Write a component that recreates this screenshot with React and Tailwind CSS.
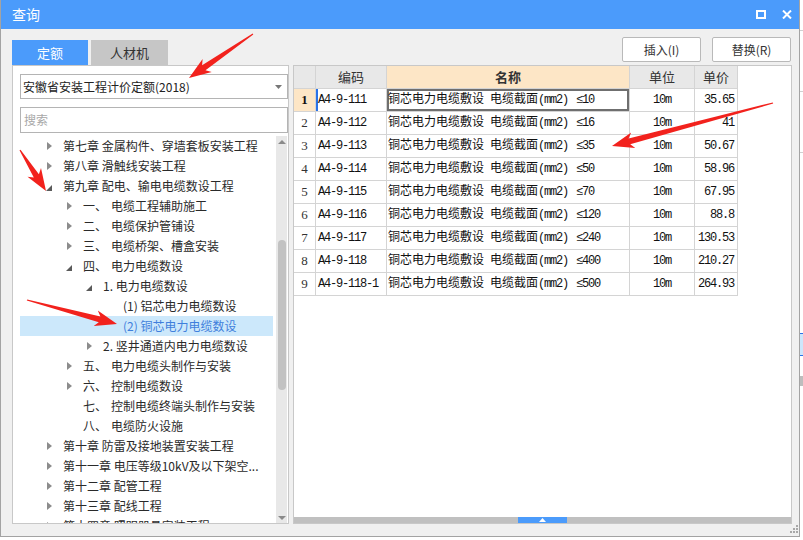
import React from "react";

const MONO = "font-['Liberation_Mono','Noto_Sans_CJK_SC',monospace]";

const TREE = [
  { lv: 0, icon: "c", text: "第七章 金属构件、穿墙套板安装工程" },
  { lv: 0, icon: "c", text: "第八章 滑触线安装工程" },
  { lv: 0, icon: "o", text: "第九章 配电、输电电缆数设工程" },
  { lv: 1, icon: "c", pre: "一、", text: "电缆工程辅助施工" },
  { lv: 1, icon: "c", pre: "二、", text: "电缆保护管铺设" },
  { lv: 1, icon: "c", pre: "三、", text: "电缆桥架、槽盒安装" },
  { lv: 1, icon: "o", pre: "四、", text: "电力电缆数设" },
  { lv: 2, icon: "o", text: "1. 电力电缆数设" },
  { lv: 3, text: "(1) 铝芯电力电缆数设" },
  { lv: 3, text: "(2) 铜芯电力电缆数设", sel: true },
  { lv: 2, icon: "c", text: "2. 竖井通道内电力电缆数设" },
  { lv: 1, icon: "c", pre: "五、", text: "电力电缆头制作与安装" },
  { lv: 1, icon: "c", pre: "六、", text: "控制电缆数设" },
  { lv: 1, pre: "七、", text: "控制电缆终端头制作与安装" },
  { lv: 1, pre: "八、", text: "电缆防火设施" },
  { lv: 0, icon: "c", text: "第十章 防雷及接地装置安装工程" },
  { lv: 0, icon: "c", text: "第十一章 电压等级10kV及以下架空..." },
  { lv: 0, icon: "c", text: "第十二章 配管工程" },
  { lv: 0, icon: "c", text: "第十三章 配线工程" },
  { lv: 0, icon: "c", text: "第十四章 照明器具安装工程" },
];

const PAD = ["pl-[26px]", "pl-[46px]", "pl-[66px]", "pl-[86px]"];

const ROWS = [
  ["A4-9-111", "10", "35.65"],
  ["A4-9-112", "16", "41"],
  ["A4-9-113", "35", "50.67"],
  ["A4-9-114", "50", "58.96"],
  ["A4-9-115", "70", "67.95"],
  ["A4-9-116", "120", "88.8"],
  ["A4-9-117", "240", "130.53"],
  ["A4-9-118", "400", "210.27"],
  ["A4-9-118-1", "500", "264.93"],
];

// red annotation arrows drawn over the screenshot
const ARROWS = [
  [253, 34, 189, 78],
  [20, 150, 46, 191],
  [27, 300, 117, 324],
  [773, 103, 612, 146],
];

function arrowPts(x1, y1, x2, y2) {
  const dx = x2 - x1, dy = y2 - y1, L = Math.hypot(dx, dy);
  const ux = dx / L, uy = dy / L, nx = -uy, ny = ux;
  const hl = 18, hw = 8, sw = 3;
  const bx = x2 - ux * hl, by = y2 - uy * hl;
  const p = (x, y) => `${x.toFixed(1)},${y.toFixed(1)}`;
  return [
    p(x1 + nx * 0.6, y1 + ny * 0.6),
    p(bx + nx * sw, by + ny * sw),
    p(bx - ux * 4 + nx * hw, by - uy * 4 + ny * hw),
    p(x2, y2),
    p(bx - ux * 4 - nx * hw, by - uy * 4 - ny * hw),
    p(bx - nx * sw, by - ny * sw),
    p(x1 - nx * 0.6, y1 - ny * 0.6),
  ].join(" ");
}

function TreeIcon({ type }) {
  if (type === "c")
    return (
      <svg width="5" height="8" className="ml-[1px]">
        <polygon points="0,0 5,4 0,8" fill="#8c8c8c" />
      </svg>
    );
  if (type === "o")
    return (
      <svg width="6" height="6" className="mt-[3px]">
        <polygon points="6,0 6,6 0,6" fill="#5a5a5a" />
      </svg>
    );
  return null;
}

function LeftPanel() {
  return (
    <div className="w-[277px] bg-white border border-[#c8c8c8] flex flex-col">
      <div className="mt-[8px] ml-[7px] w-[268px] h-[25px] border border-[#b4b4b4] flex items-center justify-between pl-[2px] pr-[5px] text-[#222]">
        <span>安徽省安装工程计价定额(2018)</span>
        <svg width="7" height="4">
          <polygon points="0,0 7,0 3.5,4" fill="#777" />
        </svg>
      </div>
      <div className="mt-[8px] ml-[7px] w-[268px] h-[26px] border border-[#b4b4b4] flex items-center pl-[3px] text-[#a8a8a8]">
        搜索
      </div>
      <div className="mt-[3px] ml-[7px] flex-1 flex overflow-hidden">
        <div className="w-[253px] flex flex-col">
          {TREE.map((r, i) => (
            <div
              key={i}
              className={`h-[20px] shrink-0 flex items-center ${PAD[r.lv]} ${r.sel ? "bg-[#cce8fb] text-[#3f7fdc]" : "text-[#2a2a2a]"}`}
            >
              <div className="w-[17px] flex items-center">
                <TreeIcon type={r.icon} />
              </div>
              {r.pre && <span className="w-[28px]">{r.pre}</span>}
              <span className="whitespace-nowrap">{r.text}</span>
            </div>
          ))}
        </div>
        <div className="ml-[3px] w-[11px] bg-[#e8e8e8] flex flex-col items-center">
          <div className="h-[11px] flex items-center">
            <svg width="8" height="4">
              <polygon points="0,4 8,4 4,0" fill="#8a8a8a" />
            </svg>
          </div>
          <div className="mt-[93px] w-[8px] h-[150px] rounded-full bg-[#c2c2c2]" />
          <div className="mt-auto h-[11px] flex items-center">
            <svg width="8" height="4">
              <polygon points="0,0 8,0 4,4" fill="#8a8a8a" />
            </svg>
          </div>
        </div>
      </div>
    </div>
  );
}

function RightPanel() {
  const cell = "border-r border-b border-[#d4d4d4] flex items-center";
  return (
    <div className="w-[499px] bg-white border border-[#c8c8c8] flex flex-col">
      <div className="grid grid-cols-[22px_71px_243px_65px_43px] auto-rows-[23px] w-[444px]">
        <div className={`${cell} bg-[#e8e8e8]`} />
        <div className={`${cell} bg-[#e8e8e8] justify-center text-[13px]`}>编码</div>
        <div className={`${cell} bg-[#fde6c6] justify-center text-[13px] font-bold`}>名称</div>
        <div className={`${cell} bg-[#e8e8e8] justify-center text-[13px]`}>单位</div>
        <div className={`${cell} bg-[#e8e8e8] justify-center text-[13px]`}>单价</div>
        {ROWS.map((r, i) => (
          <React.Fragment key={i}>
            <div
              className={`${cell} justify-center font-['Liberation_Serif',serif] text-[13px] ${i === 0 ? "bg-[#fde6c6] font-bold text-[#111]" : "text-[#333]"}`}
            >
              {i + 1}
            </div>
            <div
              className={`${cell} pl-[2px] ${MONO} tracking-[-1.2px] text-[#111] ${i === 0 ? "shadow-[inset_2px_0_0_#2a73e8]" : ""}`}
            >
              {r[0]}
            </div>
            <div
              className={`${cell} pl-[1px] ${MONO} whitespace-nowrap text-[#111] ${i === 0 ? "shadow-[inset_0_0_0_2px_#6f6f6f]" : ""}`}
            >
              <span>铜芯电力电缆敷设</span>
              <span className="ml-[6px]">电缆截面</span>
              <span className="tracking-[-1.2px]">(mm2)</span>
              <span className="ml-[8px] tracking-[-1.2px]">≤{r[1]}</span>
            </div>
            <div className={`${cell} justify-center ${MONO} tracking-[-1.2px] text-[#111]`}>10m</div>
            <div className={`${cell} justify-end pr-[3px] ${MONO} tracking-[-1.2px] text-[#111]`}>{r[2]}</div>
          </React.Fragment>
        ))}
      </div>
      <div className="flex-1" />
      <div className="h-[6px] bg-[#c0c0c0] flex justify-center">
        <div className="w-[49px] bg-[#4b9bfb] flex items-center justify-center">
          <svg width="7" height="4">
            <polygon points="0,4 7,4 3.5,0" fill="#fff" />
          </svg>
        </div>
      </div>
    </div>
  );
}

function Btn({ children }) {
  return (
    <div className="w-[79px] h-[25px] bg-white border border-[#b9b9b9] rounded-[2px] flex items-center justify-center text-[#333]">
      {children}
    </div>
  );
}

export default function App() {
  return (
    <div className="relative w-[803px] h-[540px] overflow-hidden bg-white font-['Noto_Sans_CJK_SC',sans-serif] text-[12px] text-[#333]">
      <div className="flex h-full">
        <div className="w-[800px] h-[537px] flex flex-col bg-[#f0f0f0] border-x border-b border-[#a3a3a3]">
          {/* title bar */}
          <div className="h-[29px] shrink-0 bg-[#4b9bfb] flex items-center justify-between pl-[11px] pr-[7px]">
            <span className="text-white text-[14px]">查询</span>
            <div className="flex items-center gap-[16px]">
              <svg width="10" height="9">
                <rect x="1" y="1" width="8" height="7" fill="none" stroke="#fff" strokeWidth="2" />
              </svg>
              <svg width="10" height="9">
                <path d="M1 0.5 L9 8.5 M9 0.5 L1 8.5" stroke="#fff" strokeWidth="2" />
              </svg>
            </div>
          </div>

          <div className="flex-1 flex flex-col pl-[11px] pr-[7px]">
            <div className="h-[36px] shrink-0 flex items-end justify-between">
              <div className="flex gap-[3px] h-[25px]">
                <div className="w-[76px] bg-[#4b9bfb] text-white text-[13px] flex items-center justify-center">定额</div>
                <div className="w-[77px] bg-[#c6c6c6] text-[#333] text-[13px] flex items-center justify-center">人材机</div>
              </div>
              <div className="flex gap-[11px] mb-[3px] mr-[1px]">
                <Btn>插入(I)</Btn>
                <Btn>替换(R)</Btn>
              </div>
            </div>

            <div className="h-[459px] shrink-0 flex gap-[4px]">
              <LeftPanel />
              <RightPanel />
            </div>

            <div className="flex-1 flex justify-end items-end pb-[3px] -mr-[6px]">
              <svg width="8" height="8">
                <rect x="6" y="0" width="2" height="2" fill="#a8a8a8" />
                <rect x="3" y="3" width="2" height="2" fill="#a8a8a8" />
                <rect x="6" y="3" width="2" height="2" fill="#a8a8a8" />
                <rect x="0" y="6" width="2" height="2" fill="#a8a8a8" />
                <rect x="3" y="6" width="2" height="2" fill="#a8a8a8" />
                <rect x="6" y="6" width="2" height="2" fill="#a8a8a8" />
              </svg>
            </div>
          </div>
        </div>

        {/* sliver of the window behind */}
        <div className="flex-1 flex flex-col bg-white">
          <div className="h-[30px]" />
          <div className="h-[1px] bg-[#d0d0d0]" />
          <div className="h-[60px]" />
          <div className="h-[1px] bg-[#d0d0d0]" />
          <div className="h-[60px]" />
          <div className="h-[1px] bg-[#d0d0d0]" />
          <div className="h-[180px]" />
          <div className="h-[23px] bg-[#cde6fb] border-y border-[#2a73e8]" />
          <div className="h-[20px]" />
          <div className="h-[10px] bg-[#bdbdbd]" />
        </div>
      </div>

      <svg className="absolute left-0 top-0 pointer-events-none" width="803" height="540">
        {ARROWS.map((a, i) => (
          <polygon key={i} points={arrowPts(...a)} fill="#f2221d" />
        ))}
      </svg>
    </div>
  );
}
